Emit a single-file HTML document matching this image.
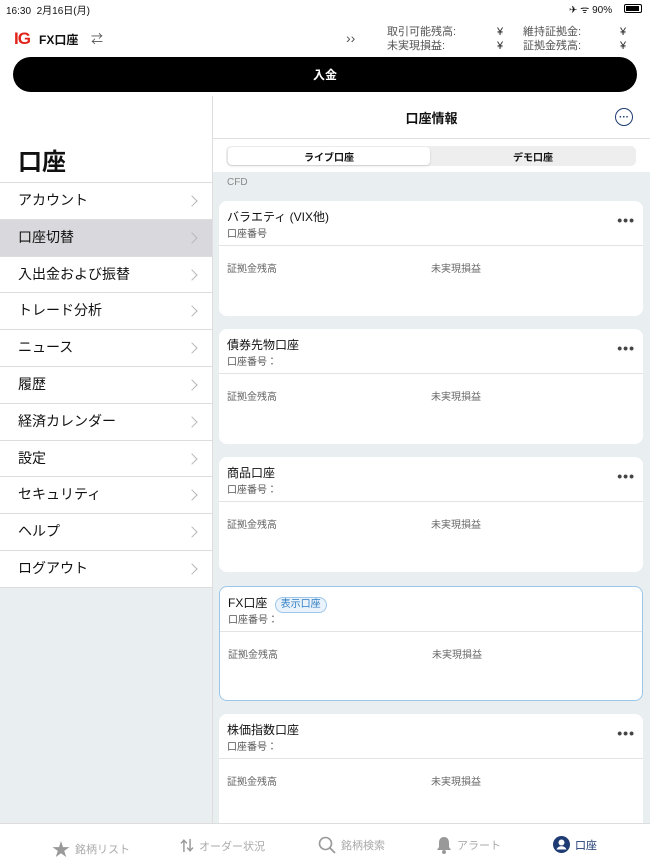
<!DOCTYPE html>
<html><head><meta charset="utf-8"><style>
*{margin:0;padding:0;box-sizing:border-box}
body{width:650px;height:866px;overflow:hidden;background:#fff;font-family:"Liberation Sans","Noto Sans CJK JP",sans-serif;color:#111;position:relative}
.abs{position:absolute}
.menu{position:absolute;left:0;top:183px;width:212px}
.menu div.r{position:relative;width:212px;height:36.8px;border-bottom:1px solid #ddd;font-size:14px;padding-left:18px;line-height:35px;background:#fff}
.menu div.r:after{content:"";position:absolute;right:16px;top:14px;width:7px;height:7px;border-right:1.5px solid #b8b8bc;border-top:1.5px solid #b8b8bc;transform:rotate(45deg)}
.card{position:absolute;left:219px;width:424px;background:#fff;border-radius:8px}
.card .t{position:absolute;left:8px;top:7px;font-size:12px;color:#111}
.card .n{position:absolute;left:8px;top:24px;font-size:10px;color:#555}
.card .d{position:absolute;left:0;right:0;top:44px;border-top:1px solid #e3e3e3}
.card .l1{position:absolute;left:8px;top:59px;font-size:10px;color:#666}
.card .l2{position:absolute;left:212px;top:59px;font-size:10px;color:#666}
.card .m{position:absolute;right:8px;top:11px;font-size:14px;letter-spacing:1px;color:#444;font-weight:bold}
.tab{position:absolute;top:836px;font-size:11px;color:#aaa;display:flex;align-items:center;gap:5px}
.seg{display:flex;align-items:center;justify-content:center}
</style></head><body>
<div class="abs" style="left:6px;top:2px;font-size:10px">16:30 &nbsp;2月16日(月)</div>
<div class="abs" style="left:569px;top:2px;font-size:10px">✈ ᯤ 90%</div>
<div class="abs" style="left:624px;top:4px;width:18px;height:9px;border:1px solid #000;border-radius:2px;padding:1px"><div style="width:13px;height:5px;background:#000"></div></div>
<div class="abs" style="left:14px;top:29px;font-size:17px;font-weight:bold;color:#e2231a;letter-spacing:-1px">IG</div>
<div class="abs" style="left:39px;top:31px;font-size:12px;font-weight:bold">FX口座</div>
<div class="abs" style="left:91px;top:30px;font-size:12px;color:#555">⇄</div>
<div class="abs" style="left:346px;top:30px;font-size:14px;color:#555">››</div>
<div class="abs" style="left:387px;top:25px;font-size:11px;color:#555;line-height:14px">取引可能残高:<br>未実現損益:</div>
<div class="abs" style="left:497px;top:25px;font-size:11px;color:#222;line-height:14px">¥<br>¥</div>
<div class="abs" style="left:523px;top:25px;font-size:11px;color:#555;line-height:14px">維持証拠金:<br>証拠金残高:</div>
<div class="abs" style="left:620px;top:25px;font-size:11px;color:#222;line-height:14px">¥<br>¥</div>
<div class="abs seg" style="left:13px;top:57px;width:624px;height:35px;background:#000;border-radius:18px;color:#fff;font-size:12px;font-weight:bold">入金</div>
<!-- left -->
<div class="abs" style="left:0;top:96px;width:212px;height:491px;background:#fff"></div>
<div class="abs" style="left:0;top:587px;width:212px;height:236px;background:#e9eff1"></div>
<div class="abs" style="left:212px;top:96px;width:1px;height:727px;background:#ddd"></div>
<div class="abs" style="left:18px;top:142px;font-size:24px;font-weight:bold">口座</div>
<div class="abs" style="left:0;top:182px;width:212px;border-top:1px solid #ddd"></div>
<div class="menu">
<div class="r">アカウント</div>
<div class="r" style="background:#d9d9dd">口座切替</div>
<div class="r">入出金および振替</div>
<div class="r">トレード分析</div>
<div class="r">ニュース</div>
<div class="r">履歴</div>
<div class="r">経済カレンダー</div>
<div class="r">設定</div>
<div class="r">セキュリティ</div>
<div class="r">ヘルプ</div>
<div class="r">ログアウト</div>
</div>
<!-- right -->
<div class="abs" style="left:213px;top:138px;width:437px;border-top:1px solid #e0e0e0"></div>
<div class="abs" style="left:213px;top:108px;width:437px;text-align:center;font-size:13px;font-weight:bold">口座情報</div>
<div class="abs seg" style="left:615px;top:108px;width:18px;height:18px;border:1.5px solid #1f3b73;border-radius:50%;font-size:10px;color:#1f3b73;font-weight:bold">···</div>
<div class="abs" style="left:226px;top:146px;width:410px;height:20px;background:#eeeeef;border-radius:5px"></div>
<div class="abs seg" style="left:228px;top:147px;width:202px;height:18px;background:#fff;border-radius:4px;box-shadow:0 1px 2px rgba(0,0,0,.15);font-size:10px;font-weight:bold">ライブ口座</div>
<div class="abs seg" style="left:432px;top:147px;width:202px;height:18px;font-size:10px;font-weight:bold">デモ口座</div>
<div class="abs" style="left:213px;top:172px;width:437px;height:651px;background:#e9eff1"></div>
<div class="abs" style="left:227px;top:177px;font-size:10px;color:#888">CFD</div>
<div class="card" style="top:201px;height:115px"><div class="t">バラエティ (VIX他)</div><div class="n">口座番号</div><div class="m">•••</div><div class="d"></div><div class="l1">証拠金残高</div><div class="l2">未実現損益</div></div>
<div class="card" style="top:329px;height:115px"><div class="t">債券先物口座</div><div class="n">口座番号：</div><div class="m">•••</div><div class="d"></div><div class="l1">証拠金残高</div><div class="l2">未実現損益</div></div>
<div class="card" style="top:457px;height:115px"><div class="t">商品口座</div><div class="n">口座番号：</div><div class="m">•••</div><div class="d"></div><div class="l1">証拠金残高</div><div class="l2">未実現損益</div></div>
<div class="card" style="top:586px;height:115px;border:1.5px solid #9cc6ea"><div class="t">FX口座 <span style="display:inline-block;margin-left:4px;font-size:10px;color:#2f7dc3;background:#eaf3fb;border:1px solid #9cc6ea;border-radius:9px;padding:0 5px;line-height:14px">表示口座</span></div><div class="n">口座番号：</div><div class="d"></div><div class="l1">証拠金残高</div><div class="l2">未実現損益</div></div>
<div class="card" style="top:714px;height:120px"><div class="t">株価指数口座</div><div class="n">口座番号：</div><div class="m">•••</div><div class="d"></div><div class="l1">証拠金残高</div><div class="l2">未実現損益</div></div>
<!-- tab bar -->
<div class="abs" style="left:0;top:823px;width:650px;height:43px;background:#fff;border-top:1px solid #ddd"></div>
<div class="tab" style="left:52px"><span style="font-size:18px;color:#999">★</span>銘柄リスト</div>
<div class="tab" style="left:180px"><span style="font-size:14px;color:#999;font-weight:bold">⇅</span>オーダー状況</div>
<div class="tab" style="left:318px"><svg width="18" height="18" viewBox="0 0 18 18"><circle cx="7.5" cy="7.5" r="6" fill="none" stroke="#999" stroke-width="1.6"/><path d="M12 12l5 5" stroke="#999" stroke-width="1.8"/></svg>銘柄検索</div>
<div class="tab" style="left:436px"><svg width="16" height="18" viewBox="0 0 16 18"><path d="M8 1c3.5 0 5 2.5 5 6v4l2 3H1l2-3V7c0-3.5 1.5-6 5-6z" fill="#999"/><circle cx="8" cy="16" r="2" fill="#999"/></svg>アラート</div>
<div class="tab" style="left:553px;color:#1f3b73"><svg width="17" height="17" viewBox="0 0 17 17"><circle cx="8.5" cy="8.5" r="8.5" fill="#1f3b73"/><circle cx="8.5" cy="6.5" r="3" fill="#fff"/><path d="M3.5 13.5c1-2.5 3-3.3 5-3.3s4 .8 5 3.3" fill="#fff"/></svg>口座</div>
</body></html>
